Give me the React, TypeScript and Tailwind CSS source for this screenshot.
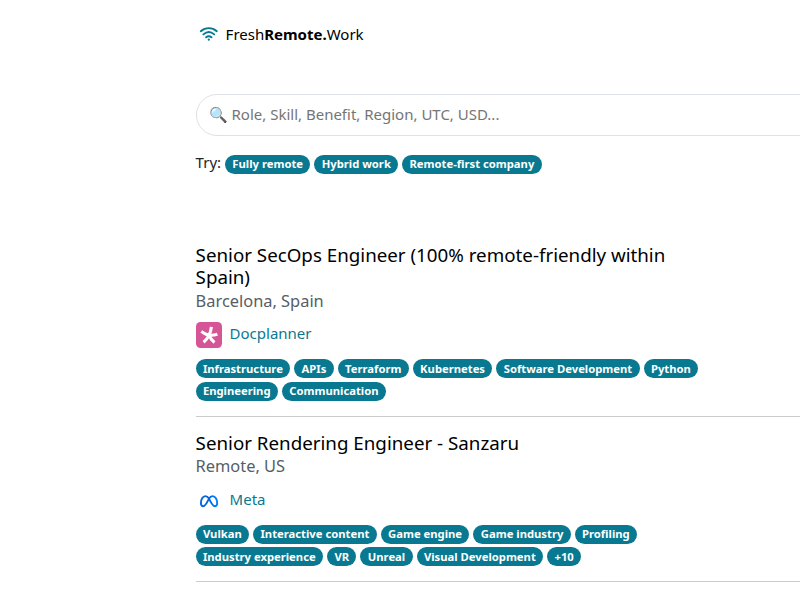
import React from "react";

type Job = {
  title: string;
  location: string;
  company: string;
  logo: React.ReactNode;
  tags: string[][];
};

function WifiLogo() {
  return (
    <svg
      viewBox="0 0 20 16"
      className="h-4 w-5 shrink-0"
      fill="none"
      stroke="#087990"
      strokeWidth="1.9"
      strokeLinecap="round"
    >
      <path d="M1.8 5.2c4.7-4.1 11.3-4.1 16 0" />
      <path d="M4.4 8.4c3.3-2.8 7.5-2.8 10.8 0" />
      <path d="M7.1 11.3c1.7-1.3 3.7-1.3 5.4 0" />
      <circle cx="9.8" cy="13.7" r="1.1" fill="#087990" stroke="none" />
    </svg>
  );
}

function DocplannerLogo() {
  return (
    <svg viewBox="0 0 26 26" className="h-[26px] w-[26px]">
      <rect width="26" height="26" rx="4.5" fill="#d65596" />
      <g fill="none" stroke="#fff" strokeWidth="3.1">
        <path d="M15.4 4.9C14.7 11.3 12.3 16.2 7.6 20.2" />
        <path d="M5.4 9.4C9.4 13 15 14.2 21.4 12.3" />
        <path d="M13.3 13.4c1 3 2.6 5 5.2 7" />
      </g>
    </svg>
  );
}

function MetaLogo() {
  return (
    <svg viewBox="0 0 26 26" className="h-[26px] w-[26px]">
      <defs>
        <linearGradient id="meta" x1="0" x2="1">
          <stop offset="0" stopColor="#0866e8" />
          <stop offset="0.5" stopColor="#0064e0" />
          <stop offset="1" stopColor="#0082fb" />
        </linearGradient>
      </defs>
      <path
        d="M13 10.6C11.9 8.9 10.7 8.1 9.3 8.1c-2.6 0-4.4 3.7-4.4 6.9 0 2.1.9 3.2 2.4 3.2 1.7 0 2.7-1.4 5.7-7.6 1.1-1.7 2.3-2.5 3.7-2.5 2.6 0 4.5 3.7 4.5 6.9 0 2.1-.9 3.2-2.4 3.2-1.7 0-2.8-1.4-5.8-7.6z"
        fill="none"
        stroke="url(#meta)"
        strokeWidth="1.9"
        strokeLinejoin="round"
      />
    </svg>
  );
}

const jobs: Job[] = [
  {
    title: "Senior SecOps Engineer (100% remote-friendly within Spain)",
    location: "Barcelona, Spain",
    company: "Docplanner",
    logo: <DocplannerLogo />,
    tags: [
      ["Infrastructure", "APIs", "Terraform", "Kubernetes", "Software Development", "Python"],
      ["Engineering", "Communication"],
    ],
  },
  {
    title: "Senior Rendering Engineer - Sanzaru",
    location: "Remote, US",
    company: "Meta",
    logo: <MetaLogo />,
    tags: [
      ["Vulkan", "Interactive content", "Game engine", "Game industry", "Profiling"],
      ["Industry experience", "VR", "Unreal", "Visual Development", "+10"],
    ],
  },
];

function Badge({ label }: { label: string }) {
  return (
    <a
      href="#"
      className="flex h-[19px] items-center rounded-full bg-[#087990] px-[7.3px] text-[11.25px] leading-none font-bold whitespace-nowrap text-white"
    >
      {label}
    </a>
  );
}

function JobRow({ job }: { job: Job }) {
  return (
    <article className="mb-[15px] border-b border-[#cbcccd] pb-[15px]">
      <h2 className="w-[510px] text-[18.75px] leading-[22.5px] text-black">{job.title}</h2>
      <p className="text-[16.4px] leading-[24px] text-[#565e64]">{job.location}</p>
      <a href="#" className="mt-[9.5px] flex h-[26px] items-center gap-2 text-[15px] text-[#087990]">
        {job.logo}
        <span className="-mt-[3px]">{job.company}</span>
      </a>
      <div className="mt-[11px] flex flex-col gap-[3.5px]">
        {job.tags.map((row, i) => (
          <div key={i} className="flex gap-[4.1px]">
            {row.map((tag) => (
              <Badge key={tag} label={tag} />
            ))}
          </div>
        ))}
      </div>
    </article>
  );
}

export default function App() {
  return (
    <div className="h-[600px] w-[800px] overflow-hidden bg-white pl-[195.6px] font-['Noto_Sans',sans-serif] text-[15px] text-[#212529]">
      <header className="flex h-[68px] items-center gap-[7px] pl-[3px] text-[15px] text-black">
        <WifiLogo />
        <span>
          Fresh<b>Remote.</b>Work
        </span>
      </header>

      <div className="mt-[26px] w-[680px]">
        <input
          type="text"
          placeholder="🔍 Role, Skill, Benefit, Region, UTC, USD..."
          className="h-[42px] w-full rounded-full border border-[#dee2e6] px-[12px] pb-[3px] text-[15px] placeholder:text-[#757575]"
        />
      </div>

      <div className="mt-[15px] flex h-[22px] items-center gap-[4px]">
        <span>Try:</span>
        <div className="mt-[4px] flex gap-[4px]">
          <Badge label="Fully remote" />
          <Badge label="Hybrid work" />
          <Badge label="Remote-first company" />
        </div>
      </div>

      <main className="mt-[70.5px] w-[680px]">
        {jobs.map((job) => (
          <JobRow key={job.company} job={job} />
        ))}
      </main>
    </div>
  );
}
